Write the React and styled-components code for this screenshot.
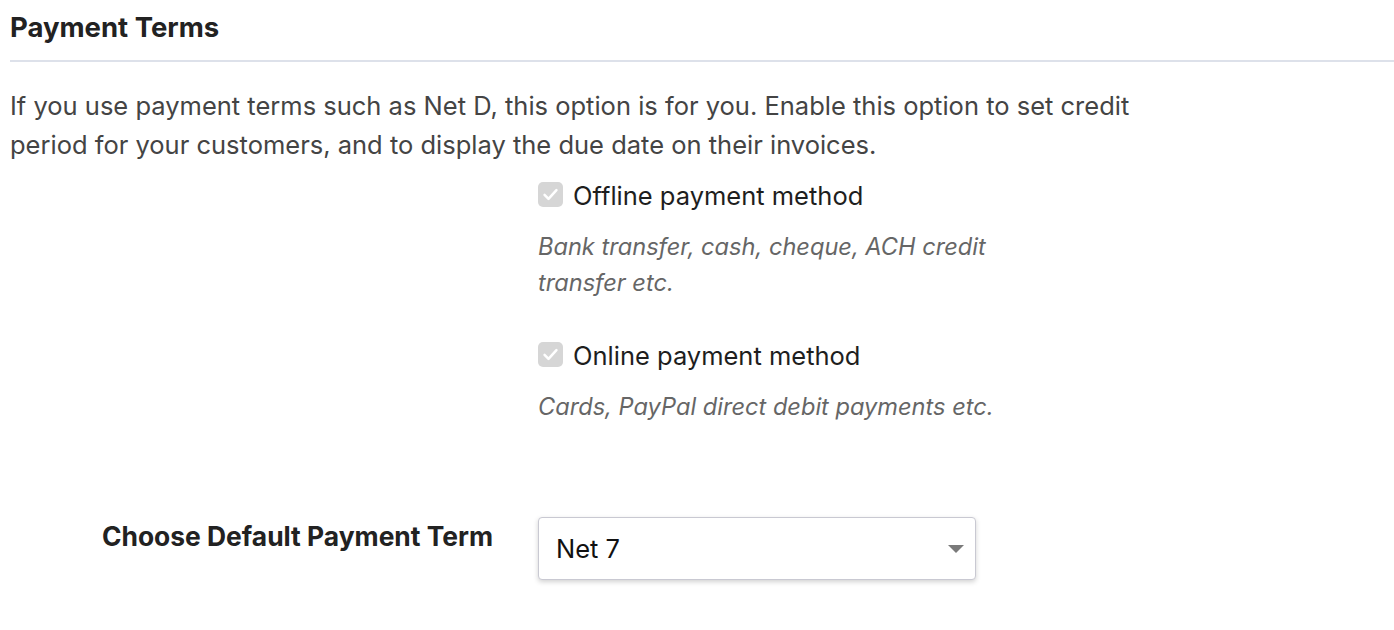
import styled, { createGlobalStyle } from 'styled-components';

const GlobalStyle = createGlobalStyle`
  body {
    margin: 0;
    background: #ffffff;
    font-family: Inter, "Noto Sans", "Liberation Sans", sans-serif;
    color: #212121;
  }
`;

// --- Layout ---
const Page = styled.div`
  padding: 12px 0 40px 10px;
`;

const Title = styled.h2`
  margin: 0;
  font-size: 27.5px;
  line-height: 30px;
  font-weight: 700;
  color: #222;
`;

const Divider = styled.hr`
  margin: 18px 0 0;
  border: none;
  border-top: 2px solid #dde1ea;
`;

const Intro = styled.p`
  margin: 24px 0 0;
  max-width: 1140px;
  font-size: 25.5px;
  line-height: 39px;
  color: #444;
`;

const FormRow = styled.div`
  display: grid;
  grid-template-columns: 528px 1fr;
  margin-top: ${props => props.$gap || 0}px;
`;

const Label = styled.label`
  padding: 4px 45px 0 0;
  text-align: right;
  font-size: 26.4px;
  line-height: 30px;
  font-weight: 700;
  color: #222;
`;

const OptionList = styled.div`
  display: flex;
  flex-direction: column;
  gap: 40px;
  width: 460px;
`;

const Option = styled.div`
  display: flex;
  flex-direction: column;
  gap: 18px;
`;

const CheckRow = styled.div`
  display: flex;
  align-items: center;
  gap: 10px;
  font-size: 25.5px;
  line-height: 30px;
  color: #1e1e1e;
`;

const CheckBox = styled.span`
  display: inline-flex;
  align-items: center;
  justify-content: center;
  width: 25px;
  height: 25px;
  margin-top: -3px;
  border-radius: 5px;
  background: #d6d6d6;
  flex-shrink: 0;
`;

const Hint = styled.div`
  font-size: 23.6px;
  line-height: 36px;
  font-style: italic;
  color: #666;
`;

const Select = styled.div`
  display: flex;
  align-items: center;
  justify-content: space-between;
  box-sizing: border-box;
  width: 438px;
  height: 63px;
  padding: 0 11px 0 17px;
  border: 1px solid #c9c9d2;
  border-radius: 4px;
  box-shadow: 0 2px 5px rgba(0, 0, 0, 0.18);
  background: #fff;
  font-size: 25.5px;
  color: #111;
`;

const Caret = styled.span`
  width: 0;
  height: 0;
  border-left: 8px solid transparent;
  border-right: 8px solid transparent;
  border-top: 8px solid #7a7a7a;
`;

const options = [
  { label: 'Offline payment method', hint: 'Bank transfer, cash, cheque, ACH credit transfer etc.' },
  { label: 'Online payment method', hint: 'Cards, PayPal direct debit payments etc.' },
];

const Check = () => (
  <CheckBox>
    <svg width="19" height="19" viewBox="0 0 24 24" fill="none" stroke="#ffffff" strokeWidth="3.2" strokeLinecap="round" strokeLinejoin="round">
      <polyline points="4.5 12.5 9.5 17.5 19.5 6.5" />
    </svg>
  </CheckBox>
);

export default function App() {
  return (
    <Page>
      <GlobalStyle />
      <Title>Payment Terms</Title>
      <Divider />
      <Intro>
        If you use payment terms such as Net D, this option is for you. Enable this option to set credit
        period for your customers, and to display the due date on their invoices.
      </Intro>

      <FormRow $gap={17}>
        <div />
        <OptionList>
          {options.map(o => (
            <Option key={o.label}>
              <CheckRow>
                <Check />
                {o.label}
              </CheckRow>
              <Hint>{o.hint}</Hint>
            </Option>
          ))}
        </OptionList>
      </FormRow>

      <FormRow $gap={92}>
        <Label>Choose Default Payment Term</Label>
        <Select>
          <span>Net 7</span>
          <Caret />
        </Select>
      </FormRow>
    </Page>
  );
}
